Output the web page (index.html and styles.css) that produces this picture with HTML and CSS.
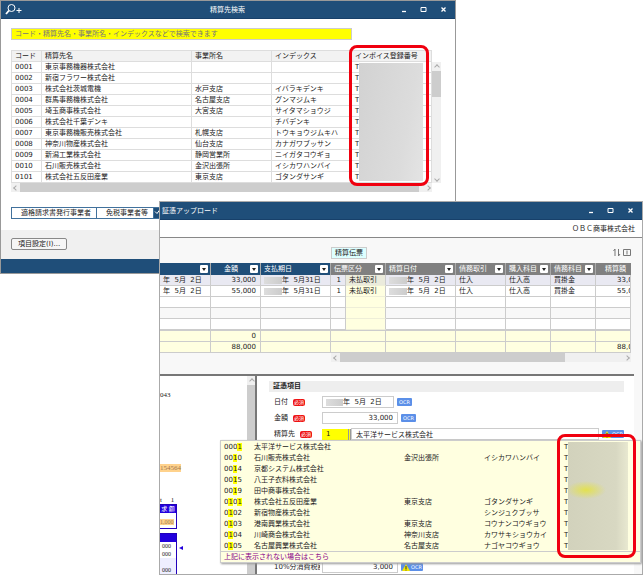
FILE: index.html
```
<!DOCTYPE html>
<html lang="ja">
	<head>
		<meta charset="utf-8" />
		<title>証憑アップロード</title>
		<meta name="viewport" content="width=device-width, initial-scale=1.0">
		<link rel="stylesheet" href="styles.css">
	</head>
	<body>
		<div id="desktop">

			<!-- search window -->
			<div class="window search-window">
				<div class="titlebar">
					<svg class="search-icon" viewBox="0 0 18 14" width="18" height="14"><circle cx="6.500" cy="5" r="3.500"/><path d="M4 7.500L1 11" stroke-width="1.800"/><path d="M11.500 7.500h5M14 5v5"/></svg>
					<h1>精算先検索</h1>
					<div class="controls">
						<button aria-label="最小化"><svg viewBox="0 0 7 7" width="7" height="7"><path d="M2 5.500h4" stroke-width="1.300"/></svg></button>
						<button aria-label="最大化"><svg viewBox="0 0 7 7" width="7" height="7"><path d="M1 1.500h5v4h-5z"/></svg></button>
						<button aria-label="閉じる"><svg viewBox="0 0 7 7" width="7" height="7"><path d="M1.500 1.500l4 4M5.500 1.500l-4 4" stroke-width="1.300"/></svg></button>
					</div>
				</div>
				<div class="search-body">
					<input class="keyword" type="text" aria-label="検索" placeholder="コード・精算先名・事業所名・インデックスなどで検索できます">
					<div class="result">
						<table class="vendors">
							<thead>
								<tr><th class="c-code">コード</th><th class="c-name">精算先名</th><th class="c-office">事業所名</th><th class="c-office">インデックス</th><th class="c-office">インボイス登録番号</th></tr>
							</thead>
							<tbody>
								<tr><td>0001</td><td>東京事務機器株式会社</td><td></td><td></td><td>T</td></tr>
								<tr><td>0002</td><td>新宿フラワー株式会社</td><td></td><td></td><td>T</td></tr>
								<tr><td>0003</td><td>株式会社茨城電機</td><td>水戸支店</td><td>イバラキデンキ</td><td>T</td></tr>
								<tr><td>0004</td><td>群馬事務機株式会社</td><td>名古屋支店</td><td>グンマジムキ</td><td>T</td></tr>
								<tr><td>0005</td><td>埼玉商事株式会社</td><td>大宮支店</td><td>サイタマショウジ</td><td>T</td></tr>
								<tr><td>0006</td><td>株式会社千葉デンキ</td><td></td><td>チバデンキ</td><td>T</td></tr>
								<tr><td>0007</td><td>東京事務機販売株式会社</td><td>札幌支店</td><td>トウキョウジムキハ</td><td>T</td></tr>
								<tr><td>0008</td><td>神奈川物産株式会社</td><td>仙台支店</td><td>カナガワブッサン</td><td>T</td></tr>
								<tr><td>0009</td><td>新潟工業株式会社</td><td>静岡営業所</td><td>ニイガタコウギョ</td><td>T</td></tr>
								<tr><td>0010</td><td>石川販売株式会社</td><td>金沢出張所</td><td>イシカワハンバイ</td><td>T</td></tr>
								<tr><td>0101</td><td>株式会社五反田産業</td><td>東京支店</td><td>ゴタンダサンギ</td><td>T</td></tr>
							</tbody>
						</table>
						<div class="vscroll"><span class="arrow up"></span><span class="thumb"></span><span class="arrow down"></span></div>
						<div class="hscroll"><span class="arrow left"></span><span class="thumb"></span><span class="arrow right"></span></div>
						<div class="mask mask-result"></div>
						<div class="marker marker-result"></div>
					</div>
					<div class="filters">
						<button>適格請求書発行事業者</button><button>免税事業者等</button><button class="on" aria-label="選択"><svg viewBox="0 0 7 7" width="7" height="7"><path d="M1 3.500l2 2l3-4"/></svg></button>
					</div>
				</div>
				<div class="search-footer"><button class="setting">項目設定(I)...</button></div>
				<div class="statusbar"></div>
			</div>

			<!-- upload window -->
			<div class="window upload-window">
				<div class="titlebar">
					<h1 class="left-title">証憑アップロード</h1>
					<div class="controls">
						<button aria-label="最小化"><svg viewBox="0 0 7 7" width="7" height="7"><path d="M2 5.500h4" stroke-width="1.300"/></svg></button>
						<button aria-label="最大化"><svg viewBox="0 0 7 7" width="7" height="7"><path d="M1 1.500h5v4h-5z"/></svg></button>
						<button aria-label="閉じる"><svg viewBox="0 0 7 7" width="7" height="7"><path d="M1.500 1.500l4 4M5.500 1.500l-4 4" stroke-width="1.300"/></svg></button>
					</div>
				</div>
				<div class="company">ＯＢＣ商事株式会社</div>
				<div class="slips">
					<div class="slip-tools">
						<button class="slip-tab">精算伝票</button>
						<svg class="tool-icons" viewBox="0 0 20 9" width="20" height="9"><path d="M4 8V1M2.500 3l1.500-2M7.500 1v7M7.500 8l1.500-2M12.500 1.500h7v6h-7zM16 2.500v4"/></svg>
					</div>
					<div class="slip-wrap">
						<table class="slip">
							<colgroup><col class="w51"><col class="w50"><col class="w70"><col class="w15"><col class="w40"><col class="w70"><col class="w50"><col class="w45"><col class="w45"><col></colgroup>
							<thead>
								<tr>
									<th><button class="dd" aria-label="絞込"></button></th>
									<th class="mid">金額<button class="dd" aria-label="絞込"></button></th>
									<th>支払期日<button class="dd" aria-label="絞込"></button></th>
									<th class="gray" colspan="2">伝票区分<button class="dd" aria-label="絞込"></button></th>
									<th class="gray">精算日付<button class="dd" aria-label="絞込"></button></th>
									<th class="gray">債務取引<button class="dd" aria-label="絞込"></button></th>
									<th class="gray">購入科目<button class="dd" aria-label="絞込"></button></th>
									<th class="gray">債務科目<button class="dd" aria-label="絞込"></button></th>
									<th class="gray last">精算額</th>
								</tr>
							</thead>
							<tbody>
								<tr class="sel"><td class="cut">年&nbsp; 5月&nbsp; 2日</td><td class="num">33,000</td><td><i class="smudge"></i>年&nbsp; 5月31日</td><td class="num">1</td><td class="kind">未払取引</td><td><i class="smudge"></i>年&nbsp; 5月&nbsp; 2日</td><td>仕入</td><td>仕入高</td><td>買掛金</td><td class="over">33,000</td></tr>
								<tr><td class="cut">年&nbsp; 5月&nbsp; 2日</td><td class="num">55,000</td><td><i class="smudge"></i>年&nbsp; 5月31日</td><td class="num">1</td><td class="kind">未払取引</td><td><i class="smudge"></i>年&nbsp; 5月&nbsp; 2日</td><td>仕入</td><td>仕入高</td><td>買掛金</td><td class="over">55,000</td></tr>
								<tr><td></td><td></td><td></td><td></td><td class="kind"></td><td></td><td></td><td></td><td></td><td></td></tr>
								<tr class="alt"><td></td><td></td><td></td><td></td><td class="kind"></td><td></td><td></td><td></td><td></td><td></td></tr>
								<tr><td></td><td></td><td></td><td></td><td class="kind"></td><td></td><td></td><td></td><td></td><td></td></tr>
							</tbody>
							<tfoot>
								<tr class="first"><td></td><td class="num">0</td><td></td><td colspan="2"></td><td></td><td></td><td></td><td></td><td></td></tr>
								<tr><td></td><td class="num">88,000</td><td></td><td colspan="2"></td><td></td><td></td><td></td><td></td><td class="over">88,000</td></tr>
							</tfoot>
						</table>
						<div class="hscroll"><span class="arrow left"></span><span class="thumb"></span><span class="arrow right"></span></div>
					</div>
				</div>
				<div class="lower">
					<div class="preview">
						<p class="p-no">043</p>
						<p class="p-reg"><mark>154564</mark></p>
						<p class="p-page">t&nbsp;&nbsp;&nbsp;&nbsp; 1</p>
						<div class="sheet"><div class="sheet-head">求 額</div><div class="sheet-sum"><mark>1,000</mark></div></div>
						<div class="sheet second"><div class="sheet-head"></div><div class="sheet-row">000</div><div class="sheet-row">000</div><div class="sheet-row tint"></div><div class="sheet-row tint">000</div><div class="sheet-row">000</div></div>
						<svg class="pointer" viewBox="0 0 4 4" width="4" height="4"><path d="M4 0v4l-4-2z"/></svg>
					</div>
					<div class="vscroll"><span class="arrow up"></span><span class="thumb"></span></div>
					<div class="form">
						<h2>証憑項目</h2>
						<div class="field"><label for="date">日付</label><span class="must">必須</span><div class="box date"><i class="smudge"></i><input id="date" type="text" value="年&nbsp; 5月&nbsp; 2日"></div><button class="ocr">OCR</button></div>
						<div class="field"><label for="amount">金額</label><span class="must">必須</span><input id="amount" class="box amount" type="text" value="33,000"><button class="ocr">OCR</button></div>
						<div class="field"><label for="vendor">精算先</label><span class="must">必須</span><input id="vendor" class="vendor-code" type="text" value="1"><input class="box vendor-name" type="text" aria-label="精算先名" value="太平洋サービス株式会社"><button class="ocr warn"><svg viewBox="0 0 8 7" width="8" height="7"><path d="M4 0l4 7h-8z"/><path d="M4 2v3M4 5.500v1"/></svg>OCR</button></div>
						<div class="field tax"><label for="tax">10%分消費税額</label><input id="tax" class="box amount" type="text" value="3,000"><button class="ocr warn"><svg viewBox="0 0 8 7" width="8" height="7"><path d="M4 0l4 7h-8z"/><path d="M4 2v3M4 5.500v1"/></svg>OCR</button></div>
					</div>
				</div>
				<div class="suggest">
					<table>
						<colgroup><col class="s-code"><col class="s-name"><col class="s-office"><col class="s-office"><col></colgroup>
						<tr><td>000<mark>1</mark></td><td>太平洋サービス株式会社</td><td></td><td></td><td>T</td></tr>
						<tr><td>00<mark>1</mark>0</td><td>石川販売株式会社</td><td>金沢出張所</td><td>イシカワハンバイ</td><td>T</td></tr>
						<tr><td>00<mark>1</mark>4</td><td>京都システム株式会社</td><td></td><td></td><td>T</td></tr>
						<tr><td>00<mark>1</mark>5</td><td>八王子衣料株式会社</td><td></td><td></td><td>T</td></tr>
						<tr><td>00<mark>1</mark>9</td><td>田中商事株式会社</td><td></td><td></td><td>T</td></tr>
						<tr><td>0<mark>1</mark>0<mark>1</mark></td><td>株式会社五反田産業</td><td>東京支店</td><td>ゴタンダサンギ</td><td>T</td></tr>
						<tr><td>0<mark>1</mark>02</td><td>新宿物産株式会社</td><td></td><td>シンジュクブッサ</td><td>T</td></tr>
						<tr><td>0<mark>1</mark>03</td><td>港南興業株式会社</td><td>東京支店</td><td>コウナンコウギョウ</td><td>T</td></tr>
						<tr><td>0<mark>1</mark>04</td><td>川崎商会株式会社</td><td>神奈川支店</td><td>カワサキショウカイ</td><td>T</td></tr>
						<tr><td>0<mark>1</mark>05</td><td>名古屋興業株式会社</td><td>名古屋支店</td><td>ナゴヤコウギョウ</td><td>T</td></tr>
					</table>
					<a class="more" href="#">上記に表示されない場合はこちら</a>
					<div class="mask mask-suggest"></div>
					<div class="marker marker-suggest"></div>
				</div>
			</div>
		</div>
	</body>
</html>
```
FILE: styles.css
```
* {
	box-sizing:border-box;
}
body, html {
	margin:0;
	padding:0;
	height:100%;
	background-color:white;
}
body, button, input {
	font-family:"DejaVu Sans", "Noto Sans CJK JP", sans-serif;
	font-size:7px;
	line-height:10px;
	color:#222;
}
button, input {
	margin:0;
	padding:0;
	border:0;
	border-radius:0;
	background:none;
}
h1, h2, p {
	margin:0;
	font-size:7px;
	font-weight:normal;
}
table {
	border-collapse:separate;
	border-spacing:0;
	table-layout:fixed;
	width:100%;
}
td, th {
	padding:0 0 0 3px;
	height:11px;
	font-weight:normal;
	text-align:left;
	white-space:nowrap;
	overflow:hidden;
}
mark {
	color:inherit;
	background-color:#ff0;
}
svg path, svg circle {
	fill:none;
	stroke:white;
}

/* windows */
#desktop {
	position:relative;
	min-height:100%;
	overflow:hidden;
}
.window {
	position:absolute;
	display:flex;
	flex-direction:column;
	border:1px solid #999;
	background-color:white;
}
.search-window {
	left:0;
	right:187px;
	top:0;
}
.upload-window {
	left:159px;
	right:0;
	top:201px;
	bottom:0;
	border-color:#aaa;
}
.titlebar {
	display:flex;
	align-items:center;
	height:18px;
	flex:none;
	background-color:#1f4e79;
	border-bottom:1px solid #17406a;
}
.titlebar h1 {
	flex:1;
	color:white;
	text-align:center;
}
.titlebar h1.left-title {
	padding-left:2px;
	text-align:left;
}
.search-icon {
	margin-left:4px;
	margin-right:32px;
}
.controls {
	display:flex;
	gap:13px;
	padding-right:8px;
}
.controls button {
	display:flex;
}

/* search window */
.search-body {
	padding:9px 15px 11px 10px;
}
.keyword {
	display:block;
	width:341px;
	height:12px;
	padding-left:3px;
	border:1px solid #ccc;
	background-color:#ff0;
}
.keyword::placeholder {
	color:#777;
}
.result {
	position:relative;
	display:grid;
	grid-template-columns:1fr 9px;
	margin-top:10px;
}
.vendors {
	border-top:1px solid #ddd;
	border-left:1px solid #ddd;
}
.vendors td, .vendors th {
	border-right:1px solid #ddd;
	border-bottom:1px solid #ddd;
}
.vendors th {
	background-color:#f2f2f2;
}
.c-code {
	width:30px;
}
.c-name {
	width:150px;
}
.c-office {
	width:80px;
}
.vscroll, .hscroll {
	display:flex;
	background-color:#f0f0f0;
}
.vscroll {
	flex-direction:column;
}
.hscroll {
	height:9px;
}
.result .vscroll {
	margin-top:12px;
}
.arrow {
	display:flex;
	flex:none;
	align-items:center;
	justify-content:center;
	width:9px;
	height:9px;
}
.arrow:before {
	content:"";
	width:3px;
	height:3px;
	border:solid #aaa;
	border-width:1px 0 0 1px;
	transform:rotate(45deg);
}
.arrow.left:before {
	transform:rotate(-45deg);
}
.arrow.right:before {
	transform:rotate(135deg);
}
.arrow.down:before {
	transform:rotate(225deg);
}
.thumb {
	background-color:#cdcdcd;
}
.vscroll .thumb {
	height:26px;
}
.vscroll .down {
	margin-top:auto;
}
.hscroll .thumb {
	flex:1;
	margin-right:4px;
}
.mask {
	position:absolute;
	background:linear-gradient(100deg, #d2d2d2, #dcdcdc 70%, #e4e4e4);
}
.mask-result {
	top:13px;
	right:17px;
	width:64px;
	height:118px;
}
.marker {
	position:absolute;
	border:3px solid #f0000f;
	border-radius:8px;
}
.marker-result {
	top:-5px;
	right:11px;
	width:80px;
	height:141px;
}
.filters {
	display:flex;
	margin-top:15px;
}
.filters button {
	height:12px;
	padding:0 5px 0 9px;
	border:1px solid #41719c;
	border-right:0;
	background-color:white;
}
.filters .on {
	width:40px;
	padding:0;
	text-align:left;
	background-color:#1f4e79;
}
.search-footer {
	height:29px;
	padding:8px 10px;
	background-color:#f0f0f0;
}
.setting {
	display:block;
	height:12px;
	padding:0 6px;
	border:1px solid #888;
	border-radius:2px;
	background-color:#f6f6f6;
}
.statusbar {
	height:14px;
	background-color:#1f4e79;
}

/* upload window */
.company {
	height:18px;
	padding:4px 7px;
	text-align:right;
	border-bottom:1px solid #888;
}
.slips {
	height:136px;
	padding:9px 11px 0 0;
	background-color:#f8f8f8;
}
.slip-tools {
	display:flex;
	justify-content:space-between;
	height:16px;
	padding-left:171px;
}
.slip-tab {
	height:12px;
	padding:0 3px;
	border:1px solid #ccc;
	background-color:#dff;
}
.tool-icons {
	margin-top:1px;
}
.tool-icons path {
	stroke:#777;
}
.slip th {
	position:relative;
	height:12px;
	color:white;
	background-color:#1f4e79;
	border-right:1px solid #aaa;
}
.slip th.gray {
	background-color:#808080;
}
.slip th.mid {
	padding-left:13px;
}
.slip th.last {
	padding-left:9px;
	border-right:0;
}
.dd {
	position:absolute;
	top:2px;
	right:2px;
	width:8px;
	height:8px;
	border-radius:1px;
	background-color:white;
}
.dd:before {
	content:"";
	position:absolute;
	left:2px;
	top:3px;
	border:2px solid transparent;
	border-top:3px solid #222;
	border-bottom:0;
}
.slip td {
	background-color:white;
	border-right:1px solid #ccc;
	border-bottom:1px solid #ccc;
}
.slip td.num {
	padding:0 4px 0 0;
	text-align:right;
}
.slip td.over {
	padding-left:21px;
}
.slip .sel td {
	background-color:#e9e9f2;
}
.slip .alt td {
	background-color:#f8f8f8;
}
.slip td.kind, .slip .alt td.kind {
	border-bottom-color:#eeeed8;
	background-color:#ffffe0;
}
.slip .sel td.kind {
	background-color:#ebebdc;
}
.slip tfoot td {
	background-color:#ffffe0;
}
.slip tfoot .first td {
	border-top:1px solid #ccc;
}
.slip-wrap .hscroll {
	margin-left:171px;
}
.slip-wrap .thumb {
	margin-right:57px;
}
.w15 {
	width:15px;
}
.w40 {
	width:40px;
}
.w45 {
	width:45px;
}
.w50 {
	width:50px;
}
.w51 {
	width:51px;
}
.w70 {
	width:70px;
}
.smudge {
	display:inline-block;
	width:18px;
	height:7px;
	vertical-align:middle;
	background:linear-gradient(90deg, #ddd, #ccc);
}
.lower {
	flex:1;
	display:flex;
	min-height:0;
	margin-right:8px;
	border-top:2px solid #777;
	box-shadow:8px 0 0 #f8f8f8;
}
.preview {
	position:relative;
	width:87px;
	overflow:hidden;
	font-family:"Liberation Serif", "Noto Sans CJK JP", serif;
	font-size:6px;
	line-height:8px;
}
.preview mark {
	background-color:#ffd28c;
	color:#a07850;
}
.p-no {
	padding-top:15px;
}
.p-reg {
	padding-top:65px;
}
.p-page {
	padding-top:24px;
}
.sheet {
	width:17px;
	border:1px solid #20b;
	border-left:0;
	overflow:hidden;
}
.sheet.second {
	margin-top:4px;
}
.sheet-head {
	height:8px;
	text-align:center;
	white-space:nowrap;
	color:white;
	background-color:#20d;
}
.sheet-sum {
	padding:5px 0 2px;
}
.sheet-row {
	height:8px;
	padding-left:2px;
}
.sheet-row.tint {
	background-color:#eef;
}
.pointer {
	position:absolute;
	left:19px;
	top:170px;
}
.pointer path {
	fill:#20d;
	stroke:none;
}
.lower .vscroll {
	width:8px;
}
.lower .vscroll .thumb {
	flex:1;
}
.form {
	flex:1;
	padding:5px 10px 0 12px;
	border-left:2px solid #777;
}
h2 {
	height:11px;
	padding-left:4px;
	font-weight:bold;
	line-height:11px;
	background-color:#eee;
}
.field {
	display:flex;
	align-items:center;
	height:12px;
	margin-top:4px;
	padding-left:5px;
}
.field label {
	overflow:hidden;
	white-space:nowrap;
}
.must {
	width:12px;
	height:7px;
	margin-left:5px;
	border-radius:2px;
	font-size:5px;
	line-height:7px;
	text-align:center;
	color:white;
	background-color:#e11;
}
.box {
	height:12px;
	border:1px solid #ccc;
	background-color:white;
}
.date {
	display:flex;
	align-items:center;
	width:72px;
	margin-left:17px;
	padding-left:3px;
}
.date input {
	width:50px;
}
.amount {
	width:76px;
	padding-right:4px;
	text-align:right;
}
.must + .amount {
	margin-left:17px;
}
.ocr {
	width:15px;
	height:8px;
	margin-left:3px;
	border-radius:1px;
	font-size:5px;
	line-height:8px;
	color:white;
	background-color:#5b8fe8;
}
.ocr.warn {
	display:flex;
	align-items:center;
	justify-content:center;
	gap:1px;
	flex:none;
	width:22px;
}
.ocr svg {
	flex:none;
}
.ocr svg path {
	fill:#f3e600;
	stroke:none;
}
.ocr svg path + path {
	stroke:#333;
}
.vendor-code {
	width:29px;
	height:11px;
	margin-left:10px;
	padding-left:4px;
	border-right:3px double #999;
	background-color:#ff0;
}
.vendor-name {
	flex:1;
	min-width:0;
	padding-left:4px;
}
.field.tax {
	margin-top:121px;
}
.tax label {
	width:46px;
}
.tax .amount {
	margin-left:2px;
}

/* vendor suggestions */
.suggest {
	position:absolute;
	left:60px;
	right:1px;
	top:238px;
	border:1px solid #ccc;
	background-color:#ffffe0;
	box-shadow:1px 1px 2px #999;
}
.suggest table {
	border-bottom:1px solid #ccc;
}
.s-code {
	width:30px;
}
.s-name {
	width:150px;
}
.s-office {
	width:80px;
}
.more {
	display:block;
	padding-left:3px;
	color:#808;
	text-decoration:none;
}
.mask-suggest {
	top:1px;
	right:12px;
	width:60px;
	height:108px;
	background:radial-gradient(ellipse 20px 9px at 18px 48px, #e3e150, transparent), linear-gradient(90deg, #d2d2bc, #d8d8c2 80%, #e8e8d0);
}
.marker-suggest {
	top:-7px;
	right:4px;
	width:79px;
	height:124px;
}
```
